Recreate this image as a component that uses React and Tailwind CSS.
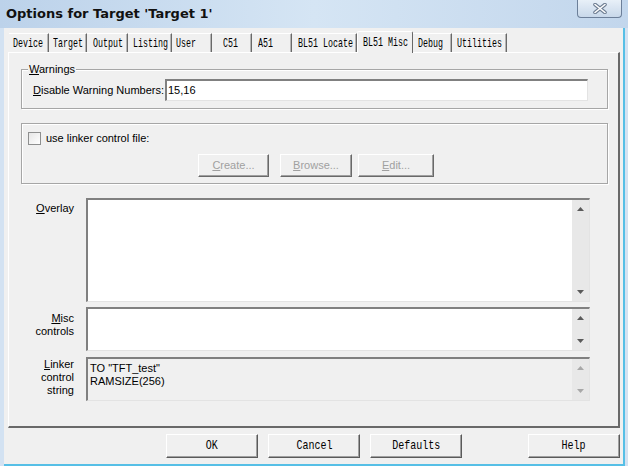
import React from 'react'

const tabs = [
    { label: 'Device', w: 'w-[40px]', pl: 'pl-[4px]' },
    { label: 'Target', w: 'w-[38px]', pl: 'pl-[4px]' },
    { label: 'Output', w: 'w-[41px]', pl: 'pl-[6px]' },
    { label: 'Listing', w: 'w-[44px]', pl: 'pl-[5px]' },
    { label: 'User', w: 'w-[40px]', pl: 'pl-[4px]' },
    { label: 'C51', w: 'w-[40px]', pl: 'pl-[11px]' },
    { label: 'A51', w: 'w-[40px]', pl: 'pl-[6px]' },
    { label: 'BL51 Locate', w: 'w-[65px]', pl: 'pl-[6px]' },
    { label: 'BL51 Misc', w: 'w-[56px]', pl: 'pl-[5px]', active: true },
    { label: 'Debug', w: 'w-[39px]', pl: 'pl-[5px]' },
    { label: 'Utilities', w: 'w-[55px]', pl: 'pl-[5px]' },
]

const mono = "font-['Liberation_Mono',monospace]"

const Arrow = ({ up, disabled }) => (
    <svg width="7" height="4" viewBox="0 0 7 4">
        <path d={up ? 'M0 4 L3.5 0 L7 4 Z' : 'M0 0 L3.5 4 L7 0 Z'} fill={disabled ? '#a8a8a8' : '#5a5a5a'} />
    </svg>
)

const ScrollBar = ({ disabled }) => (
    <div className="w-[17px] flex flex-col justify-between items-center bg-[#e8e8e8] pt-[7px] pb-[7px]">
        <Arrow up disabled={disabled} />
        <Arrow disabled={disabled} />
    </div>
)

const Box = ({ h, bg = 'bg-white', disabled, children }) => (
    <div className={`flex flex-1 ${h} ${bg} border-t-2 border-l-2 border-t-[#808080] border-l-[#808080] border-b border-r border-b-[#e3e3e3] border-r-[#e3e3e3]`}>
        <div className="flex-1 pl-[1px] pt-[2px] text-[11px] leading-[13px] text-black">{children}</div>
        <ScrollBar disabled={disabled} />
    </div>
)

const U = ({ children }) => <span className="underline underline-offset-[1px]">{children}</span>

const SmallButton = ({ w, children }) => (
    <div className={`${w} h-[23px] flex items-center justify-center text-[11px] text-[#a0a0a0] border border-t-white border-l-white border-r-[#696969] border-b-[#696969] shadow-[inset_-1px_-1px_0_#a0a0a0]`}>
        {children}
    </div>
)

const DlgButton = ({ label }) => (
    <div className="w-[92px] h-[24px] flex items-center justify-center border border-t-white border-l-white border-r-[#5a5a5a] border-b-[#5a5a5a] shadow-[inset_-1px_-1px_0_#a0a0a0]">
        <span className={`inline-block ${mono} text-[13px] scale-x-[0.77] origin-center text-black whitespace-nowrap`}>{label}</span>
    </div>
)

export default function App() {
    return (
        <div className="w-[628px] h-[466px] flex flex-col bg-[#d3e2f2] font-['Liberation_Sans',sans-serif] overflow-hidden">
            {/* title bar */}
            <div className="h-[28px] flex items-start bg-gradient-to-r from-[#bcd2ea] via-[#d5e5f4] to-[#c2d6ec]">
                <div className="pl-[6px] pt-[6px] font-['DejaVu_Sans',sans-serif] font-bold text-[13px] leading-[16px] text-[#111]">
                    Options for Target 'Target 1'
                </div>
                <div className="ml-auto mr-[6px] w-[45px] h-[18px] flex items-center justify-center rounded-b-[4px] border border-t-0 border-[#6c7f99] bg-gradient-to-b from-[#e8f0f8] to-[#c8d8ea]">
                    <svg width="14" height="11" viewBox="0 0 14 11">
                        <path d="M2 1.5 L12 9.5 M12 1.5 L2 9.5" stroke="#6d7d92" strokeWidth="3.6" strokeLinecap="round" />
                        <path d="M2 1.5 L12 9.5 M12 1.5 L2 9.5" stroke="#ffffff" strokeWidth="1.6" strokeLinecap="round" />
                    </svg>
                </div>
            </div>

            {/* body */}
            <div className="ml-[4px] w-[621px] h-[438px] bg-[#f0f0f0] border-r-2 border-b-2 border-[#56bfe6] pl-[4px] pt-[3px]">
                {/* tabs */}
                <div className="h-[21px] flex items-end pl-[1px]">
                    {tabs.map((t) =>
                        t.active ? (
                            <div
                                key={t.label}
                                className={`${t.w} ${t.pl} h-[22px] -mb-[1px] relative z-10 shrink-0 flex items-start pt-[3px] bg-[#f0f0f0] border-t border-l border-t-white border-l-white border-r border-r-[#696969] rounded-t-[2px]`}
                            >
                                <span className={`inline-block ${mono} text-[13px] leading-[15px] scale-x-[0.64] origin-left whitespace-nowrap text-black`}>{t.label}</span>
                            </div>
                        ) : (
                            <div
                                key={t.label}
                                className={`${t.w} ${t.pl} h-[19px] shrink-0 flex items-center bg-[#f0f0f0] border-t border-t-white border-r border-r-[#696969] shadow-[inset_-1px_0_0_#b5b5b5]`}
                            >
                                <span className={`inline-block ${mono} text-[13px] leading-[15px] scale-x-[0.64] origin-left whitespace-nowrap text-black`}>{t.label}</span>
                            </div>
                        )
                    )}
                </div>

                {/* tab page */}
                <div className="w-[612px] h-[376px] border-t border-l border-t-white border-l-white border-r-2 border-b-2 border-r-[#696969] border-b-[#696969] pl-[12px] pr-[10px] pt-[16px] text-[11px] text-black">
                    {/* warnings group */}
                    <div className="relative h-[40px] border border-[#a6a6a6] shadow-[inset_1px_1px_0_#ffffff,1px_1px_0_#ffffff] flex items-center pl-[11px] pr-[19px] pt-[2px]">
                        <div className="absolute -top-[7px] left-[6px] px-[1px] bg-[#f0f0f0] leading-[13px]">
                            <U>W</U>arnings
                        </div>
                        <div className="w-[132px] whitespace-nowrap">
                            <U>D</U>isable Warning Numbers:
                        </div>
                        <div className="flex-1 h-[22px] bg-white border-t-2 border-l-2 border-t-[#808080] border-l-[#808080] border-b border-r border-b-[#e3e3e3] border-r-[#e3e3e3] flex items-center pl-[1px]">
                            15,16
                        </div>
                    </div>

                    {/* linker control file group */}
                    <div className="mt-[14px] h-[61px] border border-[#a6a6a6] shadow-[inset_1px_1px_0_#ffffff,1px_1px_0_#ffffff] flex flex-col pt-[8px]">
                        <div className="h-[13px] flex items-center pl-[6px]">
                            <div className="w-[13px] h-[13px] border border-[#8e8f8f] bg-gradient-to-br from-[#e6e6e6] to-[#ffffff]" />
                            <span className="ml-[5px]">use linker control file:</span>
                        </div>
                        <div className="mt-[9px] flex pl-[176px]">
                            <SmallButton w="w-[71px]"><U>C</U>reate...</SmallButton>
                            <div className="ml-[11px]">
                                <SmallButton w="w-[72px]"><U>B</U>rowse...</SmallButton>
                            </div>
                            <div className="ml-[6px]">
                                <SmallButton w="w-[76px]"><U>E</U>dit...</SmallButton>
                            </div>
                        </div>
                    </div>

                    {/* overlay */}
                    <div className="mt-[14px] flex pr-[18px]">
                        <div className="w-[53px] mr-[12px] text-right pt-[4px] leading-[13px]">
                            <U>O</U>verlay
                        </div>
                        <Box h="h-[104px]" />
                    </div>

                    {/* misc controls */}
                    <div className="mt-[5px] flex pr-[18px]">
                        <div className="w-[53px] mr-[12px] text-right pt-[5px] leading-[13px]">
                            <U>M</U>isc<br />controls
                        </div>
                        <Box h="h-[44px]" />
                    </div>

                    {/* linker control string */}
                    <div className="mt-[6px] flex pr-[18px]">
                        <div className="w-[53px] mr-[12px] text-right pt-[1px] leading-[13px]">
                            <U>L</U>inker<br />control<br />string
                        </div>
                        <Box h="h-[44px]" bg="bg-[#f0f0f0]" disabled>
                            <div className="pl-[1px] pt-[1px]">TO "TFT_test"<br />RAMSIZE(256)</div>
                        </Box>
                    </div>
                </div>

                {/* dialog buttons */}
                <div className="mt-[6px] flex pl-[158px]">
                    <DlgButton label="OK" />
                    <div className="ml-[10px]"><DlgButton label="Cancel" /></div>
                    <div className="ml-[10px]"><DlgButton label="Defaults" /></div>
                    <div className="ml-[66px]"><DlgButton label="Help" /></div>
                </div>
            </div>
        </div>
    )
}
